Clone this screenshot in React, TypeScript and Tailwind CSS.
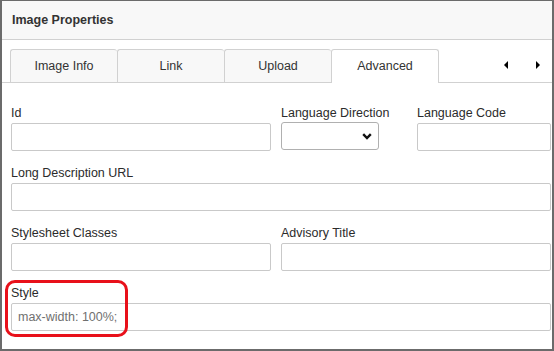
import React from "react";

function Field({ label, width, value }: { label: string; width: string; value?: string }) {
  return (
    <div className={`flex flex-col ${width}`}>
      <div className="h-4 leading-[18px] mb-[3px] whitespace-nowrap text-[#2b2b2b]">{label}</div>
      <div className="h-[28px] border border-[#c9c9c9] rounded-[2px] bg-white flex items-center pl-[6px] pt-px text-[#707070]">
        {value}
      </div>
    </div>
  );
}

export default function App() {
  const tabs = ["Image Info", "Link", "Upload"];
  return (
    <div
      className="relative w-[554px] h-[351px] bg-white border-t border-l-2 border-r-2 border-b-2 border-[#6b6b6b] text-[12.5px] overflow-hidden"
      style={{ fontFamily: '"Liberation Sans", Arial, sans-serif' }}
    >
      {/* Header */}
      <div className="h-[39px] bg-[#f8f8f8] border-b border-[#d1d1d1] flex items-center pl-[10px] pt-px">
        <span className="font-bold text-[#333]">Image Properties</span>
      </div>

      {/* Tabs */}
      <div className="pt-[9px] flex border-b border-[#d1d1d1] h-[43px]">
        <div className="w-[8px]" />
        {tabs.map((t) => (
          <div
            key={t}
            className="w-[107px] h-[33px] -mb-px bg-[#f8f8f8] border-l border-t border-[#d1d1d1] rounded-t-[3px] flex items-center justify-center text-[#333] pt-px"
          >
            {t}
          </div>
        ))}
        <div className="w-[108px] h-[34px] -mb-px bg-white border-l border-r border-t border-[#d1d1d1] rounded-t-[3px] flex items-center justify-center text-[#333]">
          Advanced
        </div>
        <div className="flex-1 flex items-center pl-[65px] pb-px">
          <svg width="4" height="8" viewBox="0 0 4 8">
            <polygon points="4,0 0,4 4,8" fill="#000" />
          </svg>
          <div className="w-[28px]" />
          <svg width="4" height="8" viewBox="0 0 4 8">
            <polygon points="0,0 4,4 0,8" fill="#000" />
          </svg>
        </div>
      </div>

      {/* Body */}
      <div className="pl-[9px] pr-px pt-[21px] flex flex-col gap-[13px]">
        <div className="flex">
          <Field label="Id" width="w-[260px]" />
          <div className="ml-[10px] w-[126px] flex flex-col">
            <div className="h-4 leading-[18px] mb-[2px] whitespace-nowrap text-[#2b2b2b]">Language Direction</div>
            <div className="w-[98px] h-[28px] border border-[#b0b0b0] rounded-[3px] bg-white flex items-center justify-end pr-[6px]">
              <svg width="10" height="7" viewBox="0 0 10 7">
                <polyline points="1.2,1.2 5,5 8.8,1.2" fill="none" stroke="#111" strokeWidth="2.4" />
              </svg>
            </div>
          </div>
          <div className="ml-[10px]">
            <Field label="Language Code" width="w-[134px]" />
          </div>
        </div>
        <Field label="Long Description URL" width="w-[540px]" />
        <div className="flex gap-[10px]">
          <Field label="Stylesheet Classes" width="w-[260px]" />
          <Field label="Advisory Title" width="w-[270px]" />
        </div>
        <Field label="Style" width="w-[540px]" value="max-width: 100%;" />
      </div>

      {/* Highlight */}
      <div className="absolute left-[3px] top-[279px] w-[123px] h-[57px] border-[3px] border-[#e8101a] rounded-[10px] pointer-events-none" />
    </div>
  );
}
